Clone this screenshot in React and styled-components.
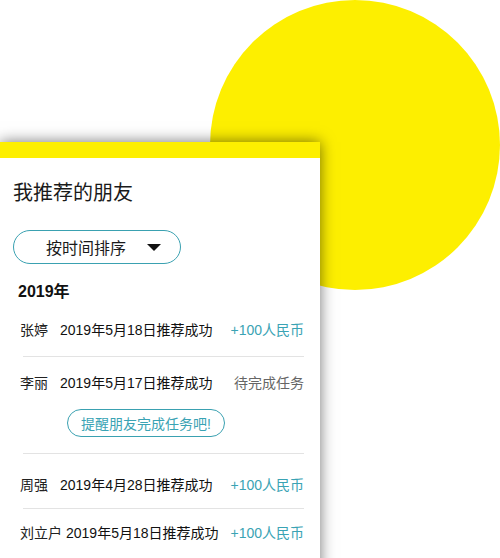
import React from "react";
import styled, { createGlobalStyle } from "styled-components";

const Global = createGlobalStyle`
  html, body { margin: 0; padding: 0; background: #fff; }
  body { font-family: "Liberation Sans", "Noto Sans CJK SC", sans-serif; color: #222; overflow: hidden; }
`;

const Stage = styled.div`
  position: relative;
  width: 500px;
  height: 558px;
  overflow: hidden;
  padding-top: 142px;
  box-sizing: border-box;
`;

const Sun = styled.div`
  position: absolute;
  left: 210px;
  top: 0;
  width: 290px;
  height: 290px;
  border-radius: 50%;
  background: #fdef00;
`;

const Card = styled.section`
  position: relative;
  width: 320px;
  min-height: 440px;
  background: #fff;
  border-top: 16px solid #fdef00;
  box-shadow: 0 0 14px rgba(0, 0, 0, 0.55);
`;

const Title = styled.h1`
  margin: 0;
  padding: 22px 0 0 13px;
  font-size: 20px;
  line-height: 26px;
  font-weight: 400;
  color: #1a1a1a;
`;

const SortButton = styled.button`
  display: flex;
  align-items: center;
  margin: 24px 0 0 13px;
  width: 168px;
  height: 34px;
  box-sizing: border-box;
  border: 1px solid #3aa1b1;
  border-radius: 17px;
  background: #fff;
  padding: 0 19px 0 32px;
  font-family: inherit;
  font-size: 16px;
  color: #1a1a1a;
`;

const SortLabel = styled.span`
  flex: 1;
  text-align: left;
`;

const Caret = styled.span`
  width: 0;
  height: 0;
  border-left: 7px solid transparent;
  border-right: 7px solid transparent;
  border-top: 7px solid #111;
`;

const Year = styled.h2`
  margin: 0;
  padding: 17px 0 0 18px;
  font-size: 16px;
  line-height: 22px;
  font-weight: 700;
  color: #111;
`;

const List = styled.div`
  padding: 0 16px 0 20px;
`;

const Item = styled.div`
  margin-left: 3px;
  padding: ${(p) => p.$pt}px 0 ${(p) => p.$pb}px;
  border-bottom: ${(p) => (p.$last ? "none" : "1px solid #e3e3e3")};
`;

const Row = styled.div`
  display: flex;
  align-items: center;
  margin-left: -3px;
  font-size: 14px;
  line-height: 20px;
`;

const Name = styled.span`
  min-width: 36px;
  margin-right: 4px;
  color: #222;
`;

const DateText = styled.span`
  color: #111;
`;

const Status = styled.span`
  margin-left: auto;
  color: ${(p) => (p.$pending ? "#666" : "#3aa3b4")};
`;

const Remind = styled.button`
  display: block;
  margin: 16px 0 0 44px;
  height: 28px;
  padding: 0 13px;
  border: 1px solid #3aa1b1;
  border-radius: 14px;
  background: #fff;
  font-family: inherit;
  font-size: 14px;
  color: #3aa3b4;
`;

const records = [
  { name: "张婷", date: "2019年5月18日推荐成功", status: "+100人民币", pt: 17, pb: 16 },
  { name: "李丽", date: "2019年5月17日推荐成功", status: "待完成任务", pending: true, pt: 16, pb: 16 },
  { name: "周强", date: "2019年4月28日推荐成功", status: "+100人民币", pt: 21, pb: 13 },
  { name: "刘立户", date: "2019年5月18日推荐成功", status: "+100人民币", pt: 14, pb: 14, last: true },
];

export default function App() {
  return (
    <>
      <Global />
      <Stage>
        <Sun />
        <Card>
          <Title>我推荐的朋友</Title>
          <SortButton>
            <SortLabel>按时间排序</SortLabel>
            <Caret />
          </SortButton>
          <Year>2019年</Year>
          <List>
            {records.map((r) => (
              <Item key={r.name} $pt={r.pt} $pb={r.pb} $last={r.last}>
                <Row>
                  <Name>{r.name}</Name>
                  <DateText>{r.date}</DateText>
                  <Status $pending={r.pending}>{r.status}</Status>
                </Row>
                {r.pending && <Remind>提醒朋友完成任务吧!</Remind>}
              </Item>
            ))}
          </List>
        </Card>
      </Stage>
    </>
  );
}
